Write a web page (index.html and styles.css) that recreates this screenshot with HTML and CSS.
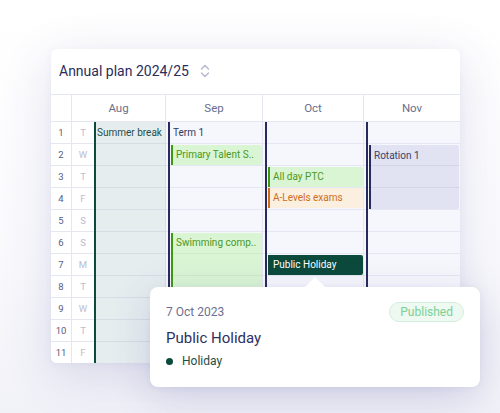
FILE: index.html
```html
<!DOCTYPE html>
<html>
<head>
<meta charset="utf-8">
<link rel="stylesheet" href="styles.css">
</head>
<body>
<div class="stage">
  <div class="card">
    <div class="card-head">
      <span class="title">Annual plan 2024/25</span>
      <svg class="sort" width="10" height="14" viewBox="0 0 10 14"><path d="M1.5 5 L5 1.5 L8.5 5 M1.5 9 L5 12.5 L8.5 9" fill="none" stroke="#b7bace" stroke-width="1.5" stroke-linecap="round" stroke-linejoin="round"/></svg>
    </div>
    <div class="grid">
      <div class="hcell h-blank"></div>
      <div class="hcell h-aug">Aug</div>
      <div class="hcell h-sep">Sep</div>
      <div class="hcell h-oct">Oct</div>
      <div class="hcell h-nov">Nov</div>

      <div class="col c-num">
        <span>1</span><span>2</span><span>3</span><span>4</span><span>5</span><span>6</span><span>7</span><span>8</span><span>9</span><span>10</span><span>11</span>
      </div>
      <div class="col c-wd">
        <span>T</span><span>W</span><span>T</span><span>F</span><span>S</span><span>S</span><span>M</span><span>T</span><span>W</span><span>T</span><span>F</span>
      </div>
      <div class="col c-aug"></div>
      <div class="col c-sep"></div>
      <div class="col c-oct"></div>
      <div class="col c-nov"></div>

      <div class="ev summer">Summer break</div>
      <div class="term t-sep">Term 1</div>
      <div class="term t-oct"></div>
      <div class="term t-nov"></div>
      <div class="ev green primary">Primary Talent S..</div>
      <div class="ev green swim">Swimming comp..</div>
      <div class="ev green ptc">All day PTC</div>
      <div class="ev orange alevels">A-Levels exams</div>
      <div class="ev navy rotation">Rotation 1</div>
      <div class="ev dark holiday">Public Holiday</div>
    </div>

    <div class="popover">
      <div class="pop-top">
        <span class="pop-date">7 Oct 2023</span>
        <span class="badge">Published</span>
      </div>
      <div class="pop-title">Public Holiday</div>
      <div class="pop-cat"><span class="dot"></span>Holiday</div>
    </div>
  </div>
</div>
</body>
</html>
```
FILE: styles.css
```css
* { box-sizing: border-box; }
html, body { margin: 0; padding: 0; }
body {
  width: 500px;
  height: 413px;
  overflow: hidden;
  background: #ffffff;
  font-family: Roboto, "Noto Sans", sans-serif;
}
.stage {
  padding: 49px 0 0 51px;
  height: 413px;
  background: linear-gradient(to bottom, #ffffff 0%, #fafafd 60%, #f1f1f8 100%);
}
.card {
  position: relative;
  width: 409px;
  height: 314px;
  background: #fff;
  border-radius: 6px;
  box-shadow: 0 12px 50px rgba(70, 70, 150, 0.16), 0 2px 8px rgba(70, 70, 150, 0.05);
  display: flex;
  flex-direction: column;
}
.card-head {
  height: 45px;
  display: flex;
  align-items: center;
  padding: 0 0 2px 8px;
  gap: 11px;
}
.title {
  font-size: 14px;
  color: #2a2d5b;
}
.grid {
  display: grid;
  grid-template-columns: 21px 22px 72px 97px 101px 96px;
  grid-template-rows: 27px repeat(11, 22px);
  border-top: 1px solid #e4e6f1;
  border-radius: 0 0 6px 6px;
  overflow: hidden;
  flex: 1;
}
.hcell {
  grid-row: 1;
  border-right: 1px solid #e4e6f1;
  border-bottom: 1px solid #e4e6f1;
  font-size: 11.5px;
  color: #6a6e8c;
  display: flex;
  align-items: center;
  justify-content: center;
  background: #fff;
}
.h-blank { grid-column: 1; }
.h-aug { grid-column: 2 / 4; }
.h-sep { grid-column: 4; }
.h-oct { grid-column: 5; }
.h-nov { grid-column: 6; border-right: none; }

.col {
  grid-row: 2 / 13;
  border-right: 1px solid #e4e6f1;
  background-color: #f6f7fc;
  background-image: repeating-linear-gradient(to bottom, transparent 0 21px, #e4e6f1 21px 22px);
}
.c-num { grid-column: 1; background-color: #fff; }
.c-wd { grid-column: 2; background-color: #fff; border-right: none; }
.c-aug { grid-column: 3; }
.c-sep { grid-column: 4; }
.c-oct { grid-column: 5; }
.c-nov { grid-column: 6; border-right: none; }
.col span {
  display: flex;
  height: 22px;
  align-items: center;
  justify-content: center;
  font-size: 9.5px;
  padding-bottom: 1px;
}
.c-num span { color: #575b7c; }
.c-wd span { color: #babdd0; }

.ev {
  font-size: 10px;
  line-height: 20px;
  padding-left: 3px;
  white-space: nowrap;
  overflow: hidden;
  border-left: 2px solid;
  border-radius: 0 2px 2px 0;
}
.summer {
  grid-column: 3;
  grid-row: 2 / 13;
  border-left-color: #0c4a3c;
  background: rgba(30, 110, 70, 0.07);
  color: #1f4d45;
  padding-left: 1px;
  border-radius: 0;
  line-height: 21px;
}
.term {
  grid-row: 2 / 13;
  margin-left: 2px;
  border-left: 2px solid #262a5c;
  font-size: 10px;
  line-height: 21px;
  color: #33375f;
  padding-left: 3px;
}
.t-sep { grid-column: 4; }
.t-oct { grid-column: 5; }
.t-nov { grid-column: 6; }

.green {
  background: rgba(170, 240, 140, 0.36);
  border-left-color: #3f9812;
  color: #4a981e;
}
.orange {
  background: #fbf0df;
  border-left-color: #cf6c18;
  color: #cf6c18;
}
.navy {
  background: rgba(150, 158, 215, 0.22);
  border-left-color: #262a5c;
  color: #3a3e68;
}
.dark {
  background: #0c4a3c;
  border-left-color: #0c4a3c;
  color: #fff;
}
.primary { grid-column: 4; grid-row: 3; margin: 1px 1px 1px 5px; }
.swim { grid-column: 4; grid-row: 7 / 13; margin: 1px 1px 0 5px; border-radius: 0; }
.ptc { grid-column: 5; grid-row: 4; margin: 1px 1px 1px 5px; }
.alevels { grid-column: 5; grid-row: 5; margin: 0 1px 2px 5px; }
.rotation { grid-column: 6; grid-row: 3 / 6; margin: 1px 1px 1px 5px; line-height: 21px; }
.holiday { grid-column: 5; grid-row: 8; margin: 1px 1px 1px 5px; padding-left: 3px; }

.popover {
  position: absolute;
  left: 99px;
  top: 238px;
  width: 330px;
  height: 100px;
  background: #fff;
  border-radius: 8px;
  box-shadow: 0 10px 40px rgba(70, 70, 150, 0.18), 0 1px 6px rgba(70, 70, 150, 0.06);
  padding: 15px 16px 0 16px;
  display: flex;
  flex-direction: column;
}
.popover::before {
  content: "";
  position: absolute;
  top: -10px;
  left: 155px;
  border-left: 10px solid transparent;
  border-right: 10px solid transparent;
  border-bottom: 10px solid #fff;
}
.pop-top {
  display: flex;
  justify-content: space-between;
  align-items: center;
  height: 20px;
}
.pop-date {
  font-size: 12px;
  color: #6d7090;
}
.badge {
  height: 20px;
  padding: 0 10px;
  border: 1px solid #d4efdc;
  background: #eefaf1;
  color: #7ccf95;
  font-size: 12px;
  border-radius: 10px;
  display: flex;
  align-items: center;
}
.pop-title {
  margin-top: 6px;
  font-size: 15px;
  color: #2d3060;
  line-height: 20px;
}
.pop-cat {
  margin-top: 4px;
  display: flex;
  align-items: center;
  gap: 9px;
  font-size: 12px;
  color: #1e4d45;
  line-height: 18px;
}
.dot {
  width: 7px;
  height: 7px;
  border-radius: 50%;
  background: #0c4a3c;
}
```
